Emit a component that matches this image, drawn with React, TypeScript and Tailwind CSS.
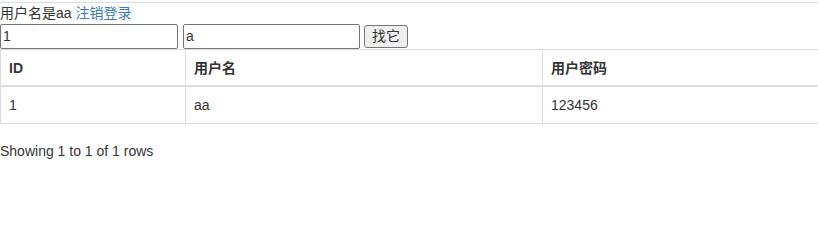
export default function App() {
  return (
    <div className="w-[818px] h-[227px] overflow-hidden bg-white text-[14px] leading-[20px] text-[#333] font-['Liberation_Sans','Noto_Sans_CJK_SC',sans-serif]">
      <div className="mt-[2px] border-t border-[#ddd]">
        <div className="h-[20px]">
          用户名是aa <a className="text-[#337ab7]" href="#">注销登录</a>
        </div>
        <div className="flex items-center h-[26px]">
          <input
            className="w-[178px] h-[25px] border border-[#767676] rounded-[2px] px-[2px] text-[14px] text-[#333] outline-none"
            defaultValue="1"
          />
          <input
            className="ml-[5px] w-[177px] h-[25px] border border-[#767676] rounded-[2px] px-[2px] text-[14px] text-[#333] outline-none"
            defaultValue="a"
          />
          <button className="ml-[4px] w-[44px] h-[23px] border border-[#767676] rounded-[3px] bg-[#efefef] text-[14px] leading-[18px] text-[#333]">
            找它
          </button>
        </div>
        <table className="w-[1100px] border-collapse table-fixed border border-[#ddd]">
          <colgroup>
            <col className="w-[185px]" />
            <col className="w-[357px]" />
            <col />
          </colgroup>
          <thead>
            <tr>
              <th className="text-left font-bold px-[8px] pt-[8px] pb-[7px] border-l border-[#ddd] border-b-2">ID</th>
              <th className="text-left font-bold px-[8px] pt-[8px] pb-[7px] border-l border-[#ddd] border-b-2">用户名</th>
              <th className="text-left font-bold px-[8px] pt-[8px] pb-[7px] border-l border-[#ddd] border-b-2">用户密码</th>
            </tr>
          </thead>
          <tbody>
            <tr>
              <td className="px-[8px] py-[8px] border-l border-[#ddd]">1</td>
              <td className="px-[8px] py-[8px] border-l border-[#ddd]">aa</td>
              <td className="px-[8px] py-[8px] border-l border-[#ddd]">123456</td>
            </tr>
          </tbody>
        </table>
        <div className="mt-[10px] leading-[34px]">Showing 1 to 1 of 1 rows</div>
      </div>
    </div>
  );
}
